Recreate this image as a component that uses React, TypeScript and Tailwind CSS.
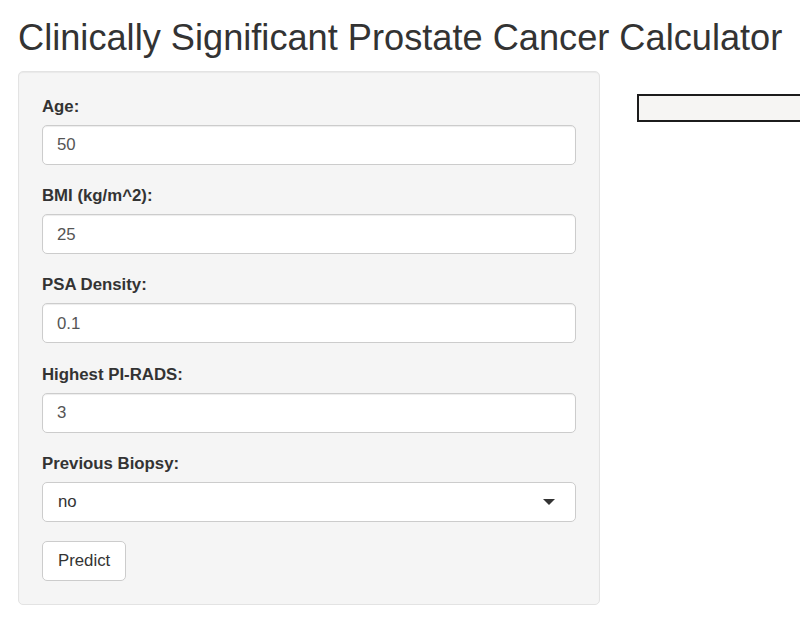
import React from 'react'

const fields = [
  { label: 'Age:', value: '50' },
  { label: 'BMI (kg/m^2):', value: '25' },
  { label: 'PSA Density:', value: '0.1' },
  { label: 'Highest PI-RADS:', value: '3' },
]

function Field({ label, value }: { label: string; value: string }) {
  return (
    <div className="mb-[19.2px]">
      <label className="mb-[6px] block text-[16.8px] font-bold leading-[24px] text-[#333]">{label}</label>
      <div className="flex h-[40px] items-center rounded-[5px] border border-[#ccc] bg-white px-[14px] text-[16.8px] text-[#555] shadow-[inset_0_1px_1px_rgba(0,0,0,0.075)]">
        {value}
      </div>
    </div>
  )
}

export default function App() {
  return (
    <div
      className="min-h-[632px] w-full overflow-hidden bg-white text-[#333]"
      style={{ fontFamily: '"Liberation Sans", Arial, sans-serif' }}
    >
      <div className="px-[18px]">
        <h2 className="mt-[18px] mb-[13px] whitespace-nowrap text-[36.2px] font-normal leading-[40px] text-[#333]">
          Clinically Significant Prostate Cancer Calculator
        </h2>
        <div className="flex">
          <div className="w-[582px] shrink-0 rounded-[5px] border border-[#e3e3e3] bg-[#f5f5f5] p-[23px] shadow-[inset_0_1px_1px_rgba(0,0,0,0.05)]">
            {fields.map((f) => (
              <Field key={f.label} label={f.label} value={f.value} />
            ))}
            <div className="mb-[19.2px]">
              <label className="mb-[6px] block text-[16.8px] font-bold leading-[24px] text-[#333]">Previous Biopsy:</label>
              <div className="flex h-[40px] items-center justify-between rounded-[5px] border border-[#ccc] bg-white pl-[15px] pr-[20px] text-[16.8px] text-[#333]">
                <span>no</span>
                <span className="h-0 w-0 border-x-[6px] border-t-[6px] border-x-transparent border-t-[#333]" />
              </div>
            </div>
            <button className="flex h-[40px] items-center rounded-[5px] border border-[#ccc] bg-white px-[15px] text-[16.8px] text-[#333]">
              Predict
            </button>
          </div>
          <div className="ml-[37px] min-w-0 flex-1 pt-[23px]">
            <div className="-mr-[30px] h-[28px] border-2 border-[#1c1c1c] bg-[#f6f5f3]" />
          </div>
        </div>
      </div>
    </div>
  )
}
